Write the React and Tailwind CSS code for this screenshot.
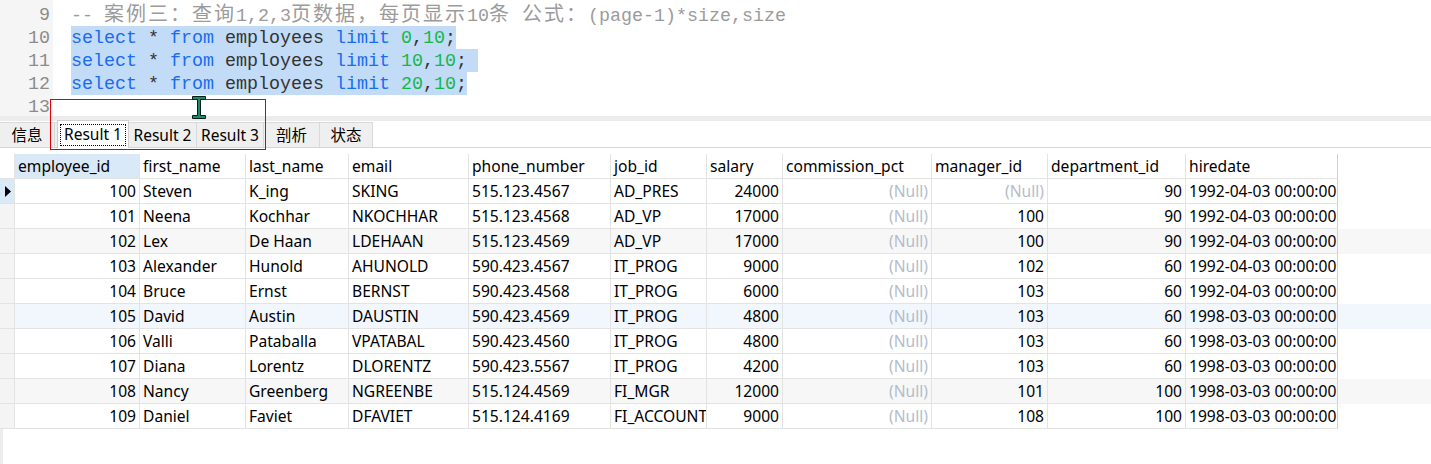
import React from 'react';

const COLS = [
  { key: 'employee_id', w: 125, num: true },
  { key: 'first_name', w: 106 },
  { key: 'last_name', w: 103 },
  { key: 'email', w: 120 },
  { key: 'phone_number', w: 142 },
  { key: 'job_id', w: 96 },
  { key: 'salary', w: 76, num: true },
  { key: 'commission_pct', w: 149, num: true },
  { key: 'manager_id', w: 116, num: true },
  { key: 'department_id', w: 138, num: true },
  { key: 'hiredate', w: 152 },
];

const NULL = null;

const ROWS = [
  ['100', 'Steven', 'K_ing', 'SKING', '515.123.4567', 'AD_PRES', '24000', NULL, NULL, '90', '1992-04-03 00:00:00'],
  ['101', 'Neena', 'Kochhar', 'NKOCHHAR', '515.123.4568', 'AD_VP', '17000', NULL, '100', '90', '1992-04-03 00:00:00'],
  ['102', 'Lex', 'De Haan', 'LDEHAAN', '515.123.4569', 'AD_VP', '17000', NULL, '100', '90', '1992-04-03 00:00:00'],
  ['103', 'Alexander', 'Hunold', 'AHUNOLD', '590.423.4567', 'IT_PROG', '9000', NULL, '102', '60', '1992-04-03 00:00:00'],
  ['104', 'Bruce', 'Ernst', 'BERNST', '590.423.4568', 'IT_PROG', '6000', NULL, '103', '60', '1992-04-03 00:00:00'],
  ['105', 'David', 'Austin', 'DAUSTIN', '590.423.4569', 'IT_PROG', '4800', NULL, '103', '60', '1998-03-03 00:00:00'],
  ['106', 'Valli', 'Pataballa', 'VPATABAL', '590.423.4560', 'IT_PROG', '4800', NULL, '103', '60', '1998-03-03 00:00:00'],
  ['107', 'Diana', 'Lorentz', 'DLORENTZ', '590.423.5567', 'IT_PROG', '4200', NULL, '103', '60', '1998-03-03 00:00:00'],
  ['108', 'Nancy', 'Greenberg', 'NGREENBE', '515.124.4569', 'FI_MGR', '12000', NULL, '101', '100', '1998-03-03 00:00:00'],
  ['109', 'Daniel', 'Faviet', 'DFAVIET', '515.124.4169', 'FI_ACCOUNT', '9000', NULL, '108', '100', '1998-03-03 00:00:00'],
];

const rowBg = (i) => {
  if (i === 2 || i === 8) return 'bg-[#f7f7f7]';
  if (i === 5) return 'bg-[#f2f7fd]';
  return 'bg-white';
};

const Kw = ({ children }) => <span className="text-[#1a6cf0]">{children}</span>;
const Num = ({ children }) => <span className="text-[#14b84a]">{children}</span>;
const Cjk = ({ children }) => <span className="text-[20px] tracking-[2px]">{children}</span>;

const SelectLine = ({ offset, extra }) => (
  <div className="h-[23px]">
    <span className={`inline-block h-[23px] bg-[#c2dbf7] pt-[1px] ${extra}`}>
      <Kw>select</Kw> * <Kw>from</Kw> employees <Kw>limit</Kw> <Num>{offset}</Num>,<Num>10</Num>;
    </span>
  </div>
);

const Editor = () => (
  <div
    className="relative flex h-[116px] overflow-hidden bg-white text-[18.33px] leading-[23px]"
    style={{ fontFamily: '"Liberation Mono", "Noto Sans CJK SC", monospace' }}
  >
    <div className="w-[53px] shrink-0 bg-[#f5f5f5] pt-[4px] pr-[3px] text-right text-[#8c8c8c]">
      <div className="h-[23px]">9</div>
      <div className="h-[23px]">10</div>
      <div className="h-[23px]">11</div>
      <div className="h-[23px]">12</div>
      <div className="h-[23px]">13</div>
    </div>
    <div className="pl-[18px] pt-[3px] whitespace-pre text-[#333333]">
      <div className="h-[23px] pt-[1px] text-[#9b9b9b]">
        -- <Cjk>案例三：查询</Cjk>1,2,3<Cjk>页数据，每页显示</Cjk>10<Cjk>条</Cjk> <Cjk>公式：</Cjk>(page-1)*size,size
      </div>
      <SelectLine offset="0" extra="" />
      <SelectLine offset="10" extra="pr-[11px]" />
      <SelectLine offset="20" extra="" />
      <div className="h-[23px]"></div>
    </div>
  </div>
);

const Tab = ({ label, w, active }) =>
  active ? (
    <div
      className="relative z-10 -mt-[2px] mb-[-1px] flex shrink-0 items-center justify-center border-x border-t border-[#cfcfcf] bg-white px-[2px]"
      style={{ width: w }}
    >
      <div className="flex h-[22px] w-full items-center justify-center border border-dotted border-black pt-[1px]">{label}</div>
    </div>
  ) : (
    <div
      className="flex shrink-0 items-center justify-center border-r border-t border-[#d9d9d9] bg-[#efefef] pt-[2px]"
      style={{ width: w }}
    >
      {label}
    </div>
  );

const Tabs = () => (
  <div className="flex h-[27px] border-b border-[#d6d6d6] bg-white pt-[1px] text-[15.5px] text-black">
    <Tab label="信息" w={55} />
    <div className="w-[2px] shrink-0 border-t border-[#d9d9d9] bg-[#efefef]" />
    <Tab label="Result 1" w={72} active />
    <Tab label="Result 2" w={68} />
    <Tab label="Result 3" w={67} />
    <Tab label="剖析" w={56} />
    <Tab label="状态" w={53} />
  </div>
);

const Grid = () => (
  <div className="flex flex-col">
    {/* header */}
    <div className="flex h-[25px]">
      <div className="w-[15px] shrink-0 border-r border-b border-[#e3e3e3] bg-white" />
      {COLS.map((c, i) => (
        <div
          key={c.key}
          className={`flex shrink-0 items-center overflow-hidden whitespace-nowrap border-r border-b border-[#e3e3e3] pl-[3px] pt-[2px] ${
            i === 0 ? 'bg-[#d9e9f8]' : 'bg-white'
          } ${i === COLS.length - 1 ? 'border-r-[#d0d0d0]' : ''}`}
          style={{ width: c.w }}
        >
          {c.key}
        </div>
      ))}
    </div>
    {ROWS.map((r, ri) => (
      <div key={r[0]} className={`flex h-[25px] ${rowBg(ri)}`}>
        <div
          className={`flex w-[15px] shrink-0 items-center border-r border-b border-[#e3e3e3] ${
            ri === 0 ? 'bg-[#d9e9f8]' : 'bg-[#f4f4f4]'
          }`}
        >
          {ri === 0 && (
            <svg width="8" height="11" viewBox="0 0 8 11" className="ml-[5px]">
              <path d="M0 0 L6 5.5 L0 11 Z" fill="#000" />
            </svg>
          )}
        </div>
        {COLS.map((c, ci) => {
          const v = r[ci];
          return (
            <div
              key={c.key}
              className={`flex shrink-0 items-center overflow-hidden whitespace-nowrap border-r border-b border-[#e3e3e3] pt-[2px] ${
                c.num ? 'justify-end pr-[3px]' : 'pl-[3px]'
              } ${ci === COLS.length - 1 ? 'border-r-[#d0d0d0]' : ''}`}
              style={{ width: c.w }}
            >
              {v === null ? <span className="text-[#b3bccb]">(Null)</span> : v}
            </div>
          );
        })}
      </div>
    ))}
  </div>
);

export default function App() {
  return (
    <div
      className="relative h-[464px] w-[1431px] overflow-hidden bg-white text-[15.6px] text-black"
      style={{ fontFamily: '"Noto Sans", "Noto Sans CJK SC", sans-serif' }}
    >
      <Editor />
      <div className="h-[5px] bg-[#ececec]" />
      <Tabs />
      <div className="h-[6px]" />
      <Grid />
      <div className="absolute bottom-0 left-0 top-[429px] w-[3px] bg-[#ededed]" />

      {/* red annotation rectangle */}
      <div className="absolute left-[50px] top-[99px] h-[51px] w-[216px] border border-[#e00000]" />

      {/* I-beam cursor */}
      <svg className="absolute left-[192px] top-[96px]" width="14" height="23" viewBox="0 0 14 23">
        <path
          d="M0.5 0.5 H13.5 V3.5 H8.5 V19.5 H13.5 V22.5 H0.5 V19.5 H5.5 V3.5 H0.5 Z"
          fill="#1a8c6c"
          stroke="#0a1a14"
          strokeWidth="1"
        />
      </svg>
    </div>
  );
}
